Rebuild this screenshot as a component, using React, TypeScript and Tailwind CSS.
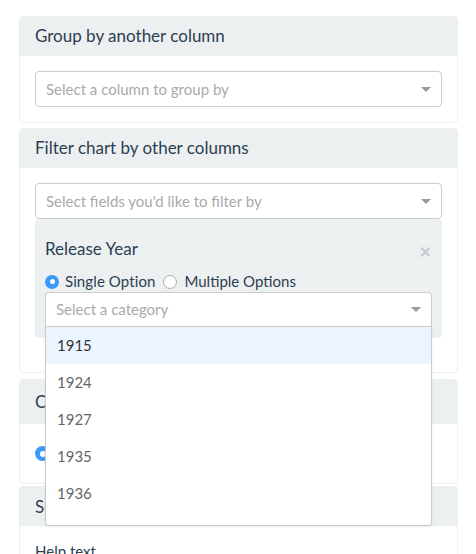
import React from "react";

function Caret() {
  return (
    <svg width="10" height="5" viewBox="0 0 10 5" className="shrink-0">
      <path d="M0 0 L10 0 L5 5 Z" fill="#999" />
    </svg>
  );
}

function SelectBox({ placeholder }: { placeholder: string }) {
  return (
    <div className="flex h-9 items-center justify-between rounded-[4px] border border-[#ccc] bg-white pl-[10px] pr-[10px]">
      <span className="text-[15px] text-[#aaa]">{placeholder}</span>
      <Caret />
    </div>
  );
}

function Radio({ checked }: { checked?: boolean }) {
  return checked ? (
    <span className="flex h-[14px] w-[14px] shrink-0 items-center justify-center rounded-full bg-[#3b99fc]">
      <span className="block h-[5px] w-[5px] rounded-full bg-white" />
    </span>
  ) : (
    <span className="block h-[14px] w-[14px] shrink-0 rounded-full border border-[#aaa] bg-white" />
  );
}

export default function App() {
  const years = ["1915", "1924", "1927", "1935", "1936"];
  return (
    <div className="relative h-[554px] w-[476px] overflow-hidden bg-white pl-[19px] pr-[18px] pt-4 font-['Lato','Open_Sans',sans-serif] text-[#2c3e50]">
      {/* Card 1 */}
      <div className="mb-[5px] rounded-[4px] border border-[#ecf0f1]">
        <div className="flex h-[39px] items-center bg-[#ecf0f1] px-[15px] pb-[2px] text-[17px]">
          Group by another column
        </div>
        <div className="p-[15px]">
          <SelectBox placeholder="Select a column to group by" />
        </div>
      </div>

      {/* Card 2 */}
      <div className="relative mb-[6px] rounded-[4px] border border-[#ecf0f1]">
        <div className="flex h-[39px] items-center bg-[#ecf0f1] px-[15px] pb-[1px] text-[17px]">
          Filter chart by other columns
        </div>
        <div className="px-[15px] pt-[15px] pb-[34px]">
          <SelectBox placeholder="Select fields you'd like to filter by" />
          <div className="relative rounded-[4px] bg-[#ecf0f1] px-[10px] pt-[18px] pb-[11px]">
            <div className="flex items-center justify-between">
              <span className="text-[17px] leading-[22px]">Release Year</span>
              <span className="mr-[1px] mt-[4px] text-[20px] font-bold leading-none text-[#c5c9cb]">×</span>
            </div>
            <div className="mt-[10px] flex h-[21px] items-center text-[15px]">
              <Radio checked />
              <span className="ml-[6px] tracking-[0.1px]">Single Option</span>
              <span className="ml-[8px]">
                <Radio />
              </span>
              <span className="ml-[7px]">Multiple Options</span>
            </div>
            <div className="relative">
              <div className="flex h-[35px] items-center justify-between rounded-t-[4px] border border-[#ccc] border-b-[#e6e6e6] bg-white pl-[10px] pr-[10px]">
                <span className="text-[15px] text-[#aaa]">Select a category</span>
                <Caret />
              </div>
              <div className="absolute left-0 right-0 top-[34px] z-10 h-[200px] rounded-b-[4px] border border-[#ccc] bg-white shadow-[0_1px_2px_rgba(0,0,0,0.1)]">
                {years.map((y, i) => (
                  <div
                    key={y}
                    className={
                      i === 0
                        ? "flex h-[37px] items-center bg-[#ebf5ff] px-[11px] text-[15px] text-[#333]"
                        : "flex h-[37px] items-center px-[11px] text-[15px] text-[#666]"
                    }
                  >
                    {y}
                  </div>
                ))}
              </div>
            </div>
          </div>
        </div>
      </div>

      {/* Card 3 */}
      <div className="mb-[2px] rounded-[4px] border border-[#ecf0f1]">
        <div className="flex h-[44px] items-center bg-[#ecf0f1] px-[15px] text-[17px]">
          Chart type
        </div>
        <div className="flex h-[59px] items-center px-[15px]">
          <span className="flex h-[15px] w-[15px] items-center justify-center rounded-full bg-[#3b99fc]">
            <span className="block h-[6px] w-[6px] rounded-full bg-white" />
          </span>
          <span className="ml-[6px] text-[15px]">Bar</span>
        </div>
      </div>

      {/* Card 4 */}
      <div className="rounded-[4px] border border-[#ecf0f1]">
        <div className="flex h-[39px] items-center bg-[#ecf0f1] px-[15px] text-[17px]">
          Settings
        </div>
        <div className="px-[15px] pt-[15px] text-[15px] leading-[21px]">Help text</div>
      </div>
    </div>
  );
}
